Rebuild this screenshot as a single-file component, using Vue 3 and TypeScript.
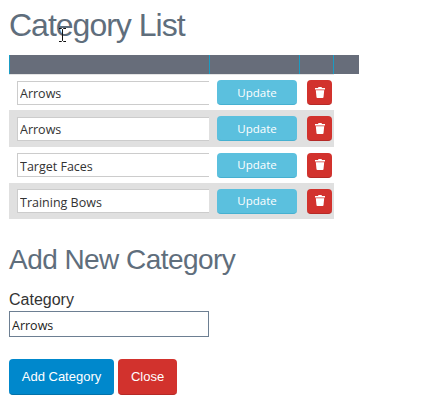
<template>
  <div class="page">
    <h1 class="title">Category List</h1>
    <svg class="cursor" width="9" height="14" viewBox="0 0 9 14">
      <path d="M1 .5h2.500l1 1 1-1H8M4.500 1.500v11M1 13.500h2.500l1-1 1 1H8" fill="none" stroke="#111" stroke-width="1" />
    </svg>

    <div class="table">
      <div class="head">
        <div class="th th-name"></div>
        <div class="th th-update"></div>
        <div class="th th-delete"></div>
        <div class="th th-extra"></div>
      </div>
      <div v-for="(name, index) in categories" :key="index" class="row" :class="{ even: index % 2 === 1 }">
        <div class="cell-name">
          <input class="name-input" type="text" :value="name" />
        </div>
        <div class="cell-update">
          <button class="btn-update">Update</button>
        </div>
        <div class="cell-delete">
          <button class="btn-delete" aria-label="Delete">
            <svg width="10" height="11" viewBox="0 0 10 11">
              <path d="M3.500 0h3l.5 1H10v1.400H0V1h3zM.8 3.200h8.400l-.7 7a.9.9 0 0 1-.9.800H2.400a.9.9 0 0 1-.9-.8z" fill="#fff" />
            </svg>
          </button>
        </div>
      </div>
    </div>

    <h2 class="subtitle">Add New Category</h2>
    <label class="label" for="category">Category</label>
    <input id="category" class="new-input" type="text" value="Arrows" />

    <div class="actions">
      <button class="btn btn-add">Add Category</button>
      <button class="btn btn-close">Close</button>
    </div>
  </div>
</template>

<script setup lang="ts">
const categories: string[] = ['Arrows', 'Arrows', 'Target Faces', 'Training Bows']
</script>

<style>
html,
body {
  background: #fff;
}
</style>

<style scoped>
.page {
  position: relative;
  width: 432px;
  height: 419px;
  padding: 9px 0 0 9px;
  box-sizing: border-box;
  overflow: hidden;
  font-family: "Liberation Sans", Arial, sans-serif;
}

.title {
  margin: 0;
  height: 46px;
  font-size: 32px;
  line-height: 32px;
  font-weight: 400;
  letter-spacing: -1px;
  color: #5f6e7c;
}

.cursor {
  position: absolute;
  left: 58px;
  top: 28px;
}

.table {
  width: 350px;
}

.head {
  display: flex;
  height: 19px;
  background: #676d7a;
}

.th {
  box-sizing: border-box;
  border-left: 1px solid #1a9cc4;
}

.th-name {
  width: 200px;
}

.th-update {
  width: 90px;
}

.th-delete {
  width: 34px;
}

.th-extra {
  width: 26px;
}

.row {
  display: flex;
  width: 325px;
  height: 36.3px;
  align-items: flex-start;
  box-sizing: border-box;
}

.row:nth-child(2) {
  box-shadow: inset 0 1px #e4e4e4;
}

.row.even {
  background: #e0e0e0;
}

.cell-name {
  width: 200px;
  padding: 6.55px 0 0 8px;
  box-sizing: border-box;
}

.name-input {
  display: block;
  width: 192px;
  height: 24px;
  box-sizing: border-box;
  padding: 2px 2px 0;
  border: 1px solid #cccccc;
  border-right: none;
  background: #fff;
  font-family: "Open Sans", sans-serif;
  font-size: 12.500px;
  color: #333;
  outline: none;
}

.cell-update {
  width: 98px;
  padding: 6px 0 0 8px;
  box-sizing: border-box;
}

.btn-update {
  display: block;
  width: 80px;
  height: 25px;
  padding: 0;
  border: none;
  border-bottom: 1px solid #46b0d0;
  border-radius: 4px;
  background: #5bc0de;
  color: #fff;
  font-family: "Open Sans", sans-serif;
  font-size: 11.500px;
}

.cell-delete {
  padding-top: 6px;
}

.btn-delete {
  display: flex;
  align-items: center;
  justify-content: center;
  width: 25px;
  height: 25px;
  padding: 0;
  border: none;
  border-bottom: 1px solid #b52a27;
  border-radius: 4px;
  background: #d2322d;
}

.subtitle {
  margin: 25px 0 0;
  height: 46px;
  font-size: 28px;
  line-height: 31px;
  font-weight: 400;
  letter-spacing: -0.55px;
  color: #5f6e7c;
}

.label {
  display: block;
  height: 21px;
  font-size: 16px;
  line-height: 20px;
  color: #333;
}

.new-input {
  display: block;
  width: 200px;
  height: 26px;
  box-sizing: border-box;
  padding: 2px 2px 0;
  border: 1px solid #6d7f92;
  background: #fff;
  font-family: "Open Sans", sans-serif;
  font-size: 12.500px;
  color: #222;
  outline: none;
}

.actions {
  display: flex;
  gap: 4px;
  margin-top: 22px;
}

.btn {
  height: 36px;
  padding: 0;
  border: none;
  border-radius: 4px;
  color: #fff;
  font-family: "Liberation Sans", Arial, sans-serif;
  font-size: 13px;
}

.btn-add {
  width: 105px;
  background: #0088cc;
  border-bottom: 1px solid #0272aa;
}

.btn-close {
  width: 59px;
  background: #d2322d;
  border-bottom: 1px solid #b52a27;
}
</style>
